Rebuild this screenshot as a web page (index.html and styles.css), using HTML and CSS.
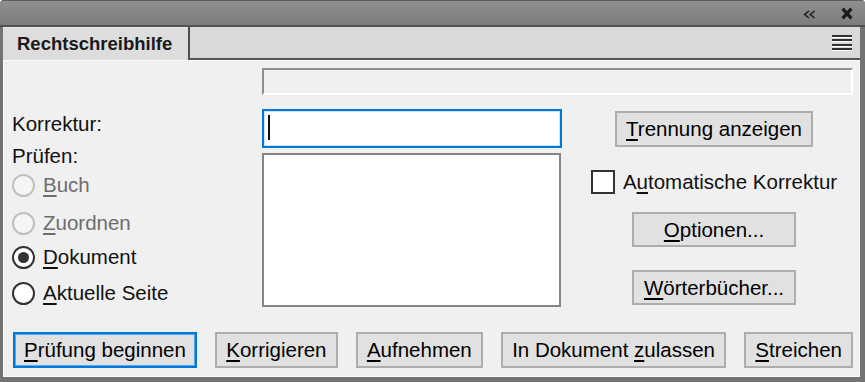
FILE: index.html
```html
<html>

<head>
  <link rel="stylesheet" href="styles.css">
</head>

<body>
  <div class="window">
    <div class="titlebar">
      <svg class="ico-collapse" width="13" height="9" viewBox="0 0 13 9">
        <path d="M6 0.8 L1.6 4.5 L6 8.2 M11.6 0.8 L7.2 4.5 L11.6 8.2" fill="none" stroke="#2a2a2a" stroke-width="1.7" />
      </svg>
      <svg class="ico-close" width="12" height="13" viewBox="0 0 12 13">
        <path d="M1.6 1.6 L10.4 11.4 M10.4 1.6 L1.6 11.4" fill="none" stroke="#1c1c1c" stroke-width="3.2" />
      </svg>
    </div>

    <div class="tabs">
      <div class="tab">Rechtschreibhilfe</div>
      <div class="tab-strip">
        <span class="menu"><i></i><i></i><i></i><i></i></span>
      </div>
    </div>

    <div class="content">
      <div class="progress"></div>

      <div class="main">
        <div class="col-left">
          <div class="label">Korrektur:</div>
          <div class="label mt-2">Prüfen:</div>
          <div class="radio disabled mt-2"><span class="dot"></span><span><u>B</u>uch</span></div>
          <div class="radio disabled mt-14"><span class="dot"></span><span><u>Z</u>uordnen</span></div>
          <div class="radio checked mt-10"><span class="dot"></span><span><u>D</u>okument</span></div>
          <div class="radio mt-12"><span class="dot"></span><span><u>A</u>ktuelle Seite</span></div>
        </div>

        <div class="col-mid">
          <div class="field"><span class="caret"></span></div>
          <div class="listbox"></div>
        </div>

        <div class="col-right">
          <button class="btn btn-wide"><u>T</u>rennung anzeigen</button>
          <div class="check"><span class="box"></span><span>A<u>u</u>tomatische Korrektur</span></div>
          <button class="btn btn-small btn-opt"><u>O</u>ptionen...</button>
          <button class="btn btn-small btn-dict"><u>W</u>örterbücher...</button>
        </div>
      </div>

      <div class="actions">
        <button class="btn btn-primary"><u>P</u>rüfung beginnen</button>
        <button class="btn"><u>K</u>orrigieren</button>
        <button class="btn"><u>A</u>ufnehmen</button>
        <button class="btn">In Dokument <u>z</u>ulassen</button>
        <button class="btn"><u>S</u>treichen</button>
      </div>
    </div>
  </div>
</body>

</html>
```

FILE: styles.css
```css
body {
  margin: 0;
  background: #ffffff;
  font-family: "Liberation Sans", Arial, sans-serif;
}

.window {
  width: 865px;
  height: 382px;
  box-sizing: border-box;
  padding: 0 5px 5px 3px;
  background: #737373;
  border-radius: 4px 4px 0 0;
  display: flex;
  flex-direction: column;
  overflow: hidden;
}

/* ---------- title bar ---------- */

.titlebar {
  height: 27px;
  box-sizing: border-box;
  margin: 0 -5px 0 -3px;
  padding-right: 12px;
  border-top: 1px solid #5e5e5e;
  border-bottom: 2px solid #525252;
  background: linear-gradient(#8f8f8f, #7c7c7c);
  display: flex;
  align-items: center;
  justify-content: flex-end;
}

.ico-collapse {
  margin-right: 25px;
  margin-top: 2px;
}

.ico-close {
  margin-top: 1px;
}

/* ---------- tabs ---------- */

.tabs {
  height: 33px;
  display: flex;
}

.tab {
  width: 185px;
  box-sizing: border-box;
  padding-left: 14px;
  padding-top: 5px;
  background: #dddddd;
  border-top: 1px solid #e8e8e8;
  font-weight: bold;
  font-size: 18.5px;
  color: #1a1a1a;
}

.tab-strip {
  flex: 1;
  background: #d9d9d9;
  border-left: 2px solid #4e4e4e;
  border-bottom: 2px solid #555555;
  display: flex;
  align-items: center;
  justify-content: flex-end;
  padding-right: 8px;
}

.menu {
  width: 20px;
  margin-top: 2px;
}

.menu i {
  display: block;
  height: 2px;
  background: #303030;
  border-bottom: 1px solid #ffffff;
  margin-bottom: 1.3px;
}

/* ---------- content ---------- */

.content {
  flex: 1;
  background: #f0f0f0;
  border: 1px solid #fbfbfb;
  padding: 7px 6px 0 8px;
}

.progress {
  height: 27px;
  margin-left: 250px;
  box-sizing: border-box;
  border-top: 2px solid #8e8e8e;
  border-left: 2px solid #8e8e8e;
  border-right: 2px solid #ffffff;
  border-bottom: 2px solid #ffffff;
  background: #f0f0f0;
}

.main {
  display: flex;
  margin-top: 14px;
  height: 198px;
}

.col-left {
  width: 250px;
  font-size: 20.5px;
}

.label {
  height: 30px;
  line-height: 30px;
  color: #111111;
}

.mt-2 {
  margin-top: 2px;
}

.mt-10 {
  margin-top: 10px;
}

.mt-12 {
  margin-top: 12px;
}

.mt-14 {
  margin-top: 14px;
}

.radio {
  height: 24px;
  display: flex;
  align-items: center;
  color: #111111;
}

.radio .dot {
  width: 23px;
  height: 23px;
  box-sizing: border-box;
  border: 2px solid #333333;
  border-radius: 50%;
  background: #ffffff;
  margin-right: 8px;
  display: flex;
  align-items: center;
  justify-content: center;
}

.radio.disabled {
  color: #6d6d6d;
}

.radio.disabled .dot {
  border-color: #c0c0c0;
  background: #f5f5f5;
}

.radio.checked .dot::after {
  content: "";
  width: 11px;
  height: 11px;
  border-radius: 50%;
  background: #333333;
}

.col-mid {
  width: 300px;
}

.field {
  height: 39px;
  box-sizing: border-box;
  border: 2px solid #0078d7;
  box-shadow: inset 0 0 0 1px #cfe3f5;
  background: #ffffff;
  padding: 4px 0 0 4px;
}

.caret {
  display: block;
  width: 2px;
  height: 25px;
  background: #111111;
}

.listbox {
  margin-top: 5px;
  height: 154px;
  width: 299px;
  box-sizing: border-box;
  border: 2px solid #82868c;
  background: #ffffff;
}

.col-right {
  flex: 1;
  padding-left: 13px;
  display: flex;
  flex-direction: column;
  align-items: center;
}

.btn {
  height: 36px;
  box-sizing: border-box;
  padding: 0 9px;
  font-family: "Liberation Sans", Arial, sans-serif;
  font-size: 20.5px;
  color: #000000;
  background: #e1e1e1;
  border: 2px solid #adadad;
}

.btn-wide {
  width: 198px;
  margin-top: 2px;
}

.btn-small {
  width: 164px;
  height: 35px;
}

.btn-opt {
  margin-top: 17px;
}

.btn-dict {
  margin-top: 23px;
}

.check {
  margin-top: 22px;
  height: 26px;
  display: flex;
  align-items: center;
  font-size: 20.5px;
  color: #111111;
}

.check .box {
  width: 24px;
  height: 24px;
  box-sizing: border-box;
  border: 2px solid #333333;
  background: #ffffff;
  margin-right: 8px;
}

.actions {
  margin-top: 25px;
  display: flex;
  justify-content: space-between;
  padding-left: 1px;
}

.btn-primary {
  border-color: #0078d7;
  box-shadow: inset 0 0 0 1px #5aa6e6;
}

u {
  text-underline-offset: 3px;
}
```
